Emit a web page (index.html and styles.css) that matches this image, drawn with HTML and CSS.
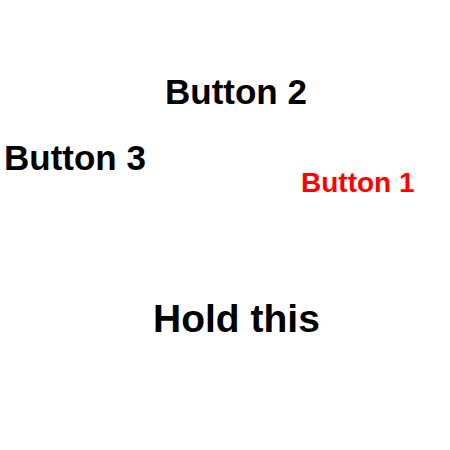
FILE: index.html
```html
<!DOCTYPE html>
<html>
<head>
<meta charset="utf-8">
<link rel="stylesheet" href="styles.css">
</head>
<body>
<div class="canvas">
  <div class="btn btn-2">Button 2</div>
  <div class="btn btn-3">Button 3</div>
  <div class="btn btn-1">Button 1</div>
  <div class="btn hold">Hold this</div>
</div>
</body>
</html>
```
FILE: styles.css
```css
html, body {
  margin: 0;
  padding: 0;
  background: #fff;
}
.canvas {
  position: relative;
  width: 450px;
  height: 450px;
  font-family: "Liberation Sans", Arial, Helvetica, sans-serif;
  font-weight: bold;
  color: #000;
}
.btn {
  position: absolute;
  line-height: 1;
  white-space: nowrap;
}
.btn-2 {
  font-size: 35px;
  left: 165px;
  top: 74px;
}
.btn-3 {
  font-size: 35px;
  left: 4px;
  top: 140px;
}
.btn-1 {
  font-size: 28px;
  left: 301px;
  top: 169px;
  color: #ff0000;
}
.hold {
  font-size: 39px;
  left: 153px;
  top: 299px;
}
```
